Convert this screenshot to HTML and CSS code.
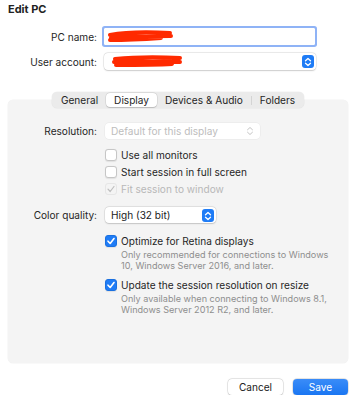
FILE: index.html
```html
<!DOCTYPE html>
<html lang="en">
<head>
    <meta charset="UTF-8">
    <meta name="viewport" content="width=device-width, initial-scale=1.0">
    <title>Edit PC</title>
    <link rel="stylesheet" href="styles.css">
</head>
<body>

<div class="sheet">
    <h1 class="title">Edit PC</h1>

    <!-- name + account -->
    <div class="top-form">
        <label class="row-label" for="pcName">PC name:</label>
        <div class="text-field" id="pcName">
            <svg class="redact" width="70" height="14" viewBox="0 0 70 14">
                <path d="M4 5 C 20 2, 45 2, 64 3 M5 8 C 25 6, 48 6, 65 6 M4 10 C 22 10, 40 9, 55 8" stroke="#ff2a00" stroke-width="4" fill="none" stroke-linecap="round"/>
            </svg>
        </div>

        <label class="row-label">User account:</label>
        <div class="popup">
            <svg class="redact" width="74" height="14" viewBox="0 0 74 14">
                <path d="M5 4 C 25 2, 50 2, 70 3 M4 7 C 25 6, 50 6, 70 7 M6 10 C 25 10, 45 10, 62 9" stroke="#ff2a00" stroke-width="4" fill="none" stroke-linecap="round"/>
            </svg>
            <span class="stepper">
                <svg width="8" height="10" viewBox="0 0 8 10"><path d="M1.5 3.8 L4 1.5 L6.5 3.8 M1.5 6.2 L4 8.5 L6.5 6.2" stroke="#fff" stroke-width="1.3" fill="none" stroke-linecap="round" stroke-linejoin="round"/></svg>
            </span>
        </div>
    </div>

    <!-- tabs -->
    <div class="tabs">
        <span class="tab">General</span>
        <span class="tab active">Display</span>
        <span class="tab">Devices &amp; Audio</span>
        <span class="tab-sep"></span>
        <span class="tab">Folders</span>
    </div>

    <div class="panel">
        <div class="panel-row">
            <span class="row-label">Resolution:</span>
            <div class="popup disabled res-popup">
                <span>Default for this display</span>
                <svg class="chev" width="8" height="10" viewBox="0 0 8 10"><path d="M1.5 3.8 L4 1.5 L6.5 3.8 M1.5 6.2 L4 8.5 L6.5 6.2" stroke="#c4c4c4" stroke-width="1" fill="none" stroke-linecap="round" stroke-linejoin="round"/></svg>
            </div>
        </div>

        <div class="check-list">
            <div class="check-row"><span class="box"></span>Use all monitors</div>
            <div class="check-row"><span class="box"></span>Start session in full screen</div>
            <div class="check-row disabled">
                <span class="box">
                    <svg width="10" height="10" viewBox="0 0 10 10"><path d="M2 5.2 L4.2 7.5 L8 2.5" stroke="#bdbdbd" stroke-width="1.2" fill="none" stroke-linecap="round" stroke-linejoin="round"/></svg>
                </span>Fit session to window
            </div>
        </div>

        <div class="panel-row color-row">
            <span class="row-label">Color quality:</span>
            <div class="popup color-popup">
                <span>High (32 bit)</span>
                <span class="stepper">
                    <svg width="8" height="10" viewBox="0 0 8 10"><path d="M1.5 3.8 L4 1.5 L6.5 3.8 M1.5 6.2 L4 8.5 L6.5 6.2" stroke="#fff" stroke-width="1.3" fill="none" stroke-linecap="round" stroke-linejoin="round"/></svg>
                </span>
            </div>
        </div>

        <div class="option">
            <div class="check-row"><span class="box checked">
                <svg width="10" height="10" viewBox="0 0 10 10"><path d="M2 5.2 L4.2 7.5 L8 2.5" stroke="#fff" stroke-width="1.6" fill="none" stroke-linecap="round" stroke-linejoin="round"/></svg>
            </span>Optimize for Retina displays</div>
            <p class="hint">Only recommended for connections to Windows<br>10, Windows Server 2016, and later.</p>
        </div>

        <div class="option second">
            <div class="check-row"><span class="box checked">
                <svg width="10" height="10" viewBox="0 0 10 10"><path d="M2 5.2 L4.2 7.5 L8 2.5" stroke="#fff" stroke-width="1.6" fill="none" stroke-linecap="round" stroke-linejoin="round"/></svg>
            </span>Update the session resolution on resize</div>
            <p class="hint">Only available when connecting to Windows 8.1,<br>Windows Server 2012 R2, and later.</p>
        </div>
    </div>

    <div class="actions">
        <button class="btn">Cancel</button>
        <button class="btn primary">Save</button>
    </div>
</div>

</body>
</html>
```

FILE: styles.css
```css
body {
    margin: 0;
    padding: 0;
    background-color: #ffffff;
    font-family: 'Inter', 'Liberation Sans', sans-serif;
    font-size: 10.1px;
    color: #262626;
}

.sheet {
    width: 340px;
    padding: 3px 11px 0 8px;
}

.title {
    margin: 0;
    font-size: 11px;
    line-height: 13px;
    font-weight: 700;
    color: #222;
}

.top-form {
    display: grid;
    grid-template-columns: 89px 212px;
    column-gap: 7px;
    row-gap: 7px;
    margin-top: 11px;
    align-items: center;
}

.row-label {
    text-align: right;
    color: #262626;
}

.text-field {
    height: 15px;
    border: 1px solid #fff;
    background: #fff;
    border-radius: 1px;
    box-shadow: 0 0 0 2px #8fb3f6;
    margin: 1px 1px 1px 0;
    display: flex;
    align-items: center;
}

.popup {
    position: relative;
    height: 17px;
    background: #fff;
    border-radius: 4px;
    box-shadow: 0 0 0 0.5px rgba(0, 0, 0, 0.12), 0 0.5px 1.5px rgba(0, 0, 0, 0.15);
    display: flex;
    align-items: center;
    padding-left: 6px;
    box-sizing: border-box;
}

.redact {
    display: block;
}

.text-field .redact {
    margin-left: 1px;
}

.stepper {
    position: absolute;
    right: 2px;
    top: 2px;
    width: 12px;
    height: 13px;
    border-radius: 3px;
    background: #1f7cf6;
    display: flex;
    align-items: center;
    justify-content: center;
}

.tabs {
    position: relative;
    z-index: 1;
    display: flex;
    align-items: center;
    width: max-content;
    margin: 22px auto 0;
    height: 16px;
    padding: 0 1px;
    background: #ebebeb;
    border-radius: 5px;
    box-shadow: 0 0 0 0.5px rgba(0, 0, 0, 0.06);
}

.tab {
    padding: 0 8px;
    height: 14px;
    line-height: 14px;
    border-radius: 4px;
    color: #262626;
}

.tab.active {
    background: #fff;
    box-shadow: 0 0 0 0.5px rgba(0, 0, 0, 0.12), 0 0.5px 1px rgba(0, 0, 0, 0.15);
}

.tab-sep {
    width: 1px;
    height: 9px;
    background: #d4d4d4;
}

.panel {
    margin-top: -8px;
    height: 263px;
    box-sizing: border-box;
    padding-top: 23px;
    background: #f4f4f4;
    border-radius: 5px;
    box-shadow: 0 0 0 0.5px rgba(0, 0, 0, 0.05);
}

.panel-row {
    display: grid;
    grid-template-columns: 89px auto;
    column-gap: 8px;
    align-items: center;
    height: 16px;
}

.popup.disabled {
    color: #bdbdbd;
    box-shadow: 0 0 0 0.5px rgba(0, 0, 0, 0.06);
    height: 16px;
}

.res-popup {
    width: 155px;
}

.chev {
    position: absolute;
    right: 6px;
    top: 3px;
}

.check-list {
    margin-top: 7px;
    padding-left: 97px;
}

.check-row {
    display: flex;
    align-items: center;
    height: 17px;
    color: #262626;
}

.check-row.disabled {
    color: #b8b8b8;
}

.box {
    width: 12px;
    height: 12px;
    box-sizing: border-box;
    margin-right: 4px;
    border-radius: 3px;
    background: #fff;
    border: 0.5px solid #c6c6c6;
    box-shadow: 0 0.5px 1px rgba(0, 0, 0, 0.08);
    display: flex;
    align-items: center;
    justify-content: center;
}

.check-row.disabled .box {
    background: transparent;
    border-color: #e6e6e6;
    box-shadow: none;
}

.box.checked {
    background: #1f7cf6;
    border-color: #1a70e0;
}

.color-row {
    margin-top: 10px;
}

.color-popup {
    width: 111px;
    height: 16px;
    color: #222;
}

.option {
    margin-top: 10px;
    padding-left: 97px;
}

.option .check-row {
    height: 16px;
}

.option.second {
    margin-top: 6px;
}

.hint {
    margin: 0;
    padding-left: 16px;
    font-size: 9.1px;
    line-height: 11px;
    color: #8e8e8e;
    white-space: nowrap;
}

.actions {
    display: flex;
    justify-content: flex-end;
    gap: 10px;
    margin-top: 16px;
}

.btn {
    width: 55px;
    height: 16px;
    padding: 0;
    font-family: inherit;
    font-size: 10.1px;
    color: #222;
    background: #fff;
    border: none;
    border-radius: 4px;
    box-shadow: 0 0 0 0.5px rgba(0, 0, 0, 0.15), 0 0.5px 1.5px rgba(0, 0, 0, 0.18);
}

.btn.primary {
    color: #fff;
    background: linear-gradient(#3a8cf8, #1a76f2);
}
```
